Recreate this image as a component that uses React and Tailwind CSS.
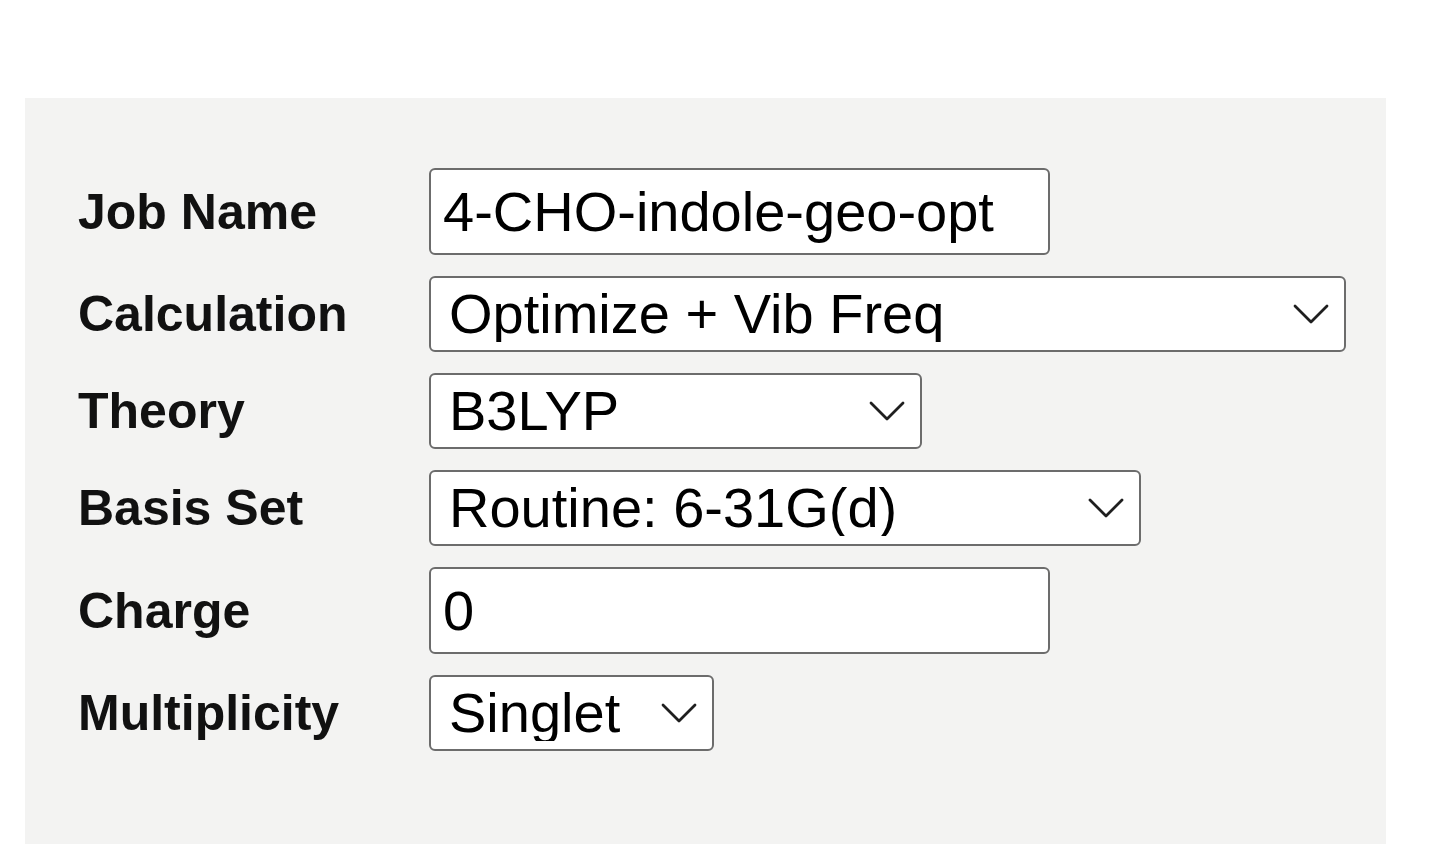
import React, { useState } from 'react';

const Chevron = () => (
  <svg
    width="36"
    height="20"
    viewBox="0 0 36 20"
    className="pointer-events-none absolute right-[17px] top-1/2 -translate-y-1/2"
    fill="none"
    stroke="#1f1f1f"
    strokeWidth="2.8"
    strokeLinecap="round"
    strokeLinejoin="round"
  >
    <path d="M2 2 L18 18 L34 2" />
  </svg>
);

const Select = ({ value, options, onChange, width }) => (
  <div className={`relative ${width}`}>
    <select
      value={value}
      onChange={(e) => onChange(e.target.value)}
      className="h-[76px] w-full appearance-none rounded-[6px] border-2 border-[#6c6c6c] bg-white pl-[18px] pr-[60px] text-[56px] leading-none text-black outline-none"
    >
      {options.map((o) => (
        <option key={o} value={o}>
          {o}
        </option>
      ))}
    </select>
    <Chevron />
  </div>
);

const Label = ({ children }) => (
  <div className="flex items-center text-[50px] font-bold leading-none text-[#111]">{children}</div>
);

const App = () => {
  const [jobName, setJobName] = useState('4-CHO-indole-geo-opt');
  const [calc, setCalc] = useState('Optimize + Vib Freq');
  const [theory, setTheory] = useState('B3LYP');
  const [basis, setBasis] = useState('Routine: 6-31G(d)');
  const [charge, setCharge] = useState('0');
  const [mult, setMult] = useState('Singlet');

  return (
    <div className="min-h-screen bg-white pt-[98px] pl-[25px] font-['Liberation_Sans',Arial,sans-serif]">
      <div className="w-[1361px] bg-[#f3f3f2] pl-[53px] pt-[70px] pb-[93px]">
        <div className="grid grid-cols-[351px_auto] gap-y-[21px]">
          <Label>Job Name</Label>
          <input
            type="text"
            value={jobName}
            onChange={(e) => setJobName(e.target.value)}
            className="h-[87px] w-[621px] rounded-[6px] border-2 border-[#6c6c6c] bg-white px-[12px] text-[56px] leading-none text-black outline-none"
          />

          <Label>Calculation</Label>
          <Select
            value={calc}
            onChange={setCalc}
            width="w-[917px]"
            options={['Optimize + Vib Freq', 'Energy', 'Optimize', 'Vib Freq']}
          />

          <Label>Theory</Label>
          <Select value={theory} onChange={setTheory} width="w-[493px]" options={['B3LYP', 'HF', 'MP2', 'PBE0']} />

          <Label>Basis Set</Label>
          <Select
            value={basis}
            onChange={setBasis}
            width="w-[712px]"
            options={['Routine: 6-31G(d)', 'Minimal: STO-3G', 'Large: 6-311+G(d,p)']}
          />

          <Label>Charge</Label>
          <input
            type="text"
            value={charge}
            onChange={(e) => setCharge(e.target.value)}
            className="h-[87px] w-[621px] rounded-[6px] border-2 border-[#6c6c6c] bg-white px-[12px] text-[56px] leading-none text-black outline-none"
          />

          <Label>Multiplicity</Label>
          <Select value={mult} onChange={setMult} width="w-[285px]" options={['Singlet', 'Doublet', 'Triplet']} />
        </div>
      </div>
    </div>
  );
};

export default App;
